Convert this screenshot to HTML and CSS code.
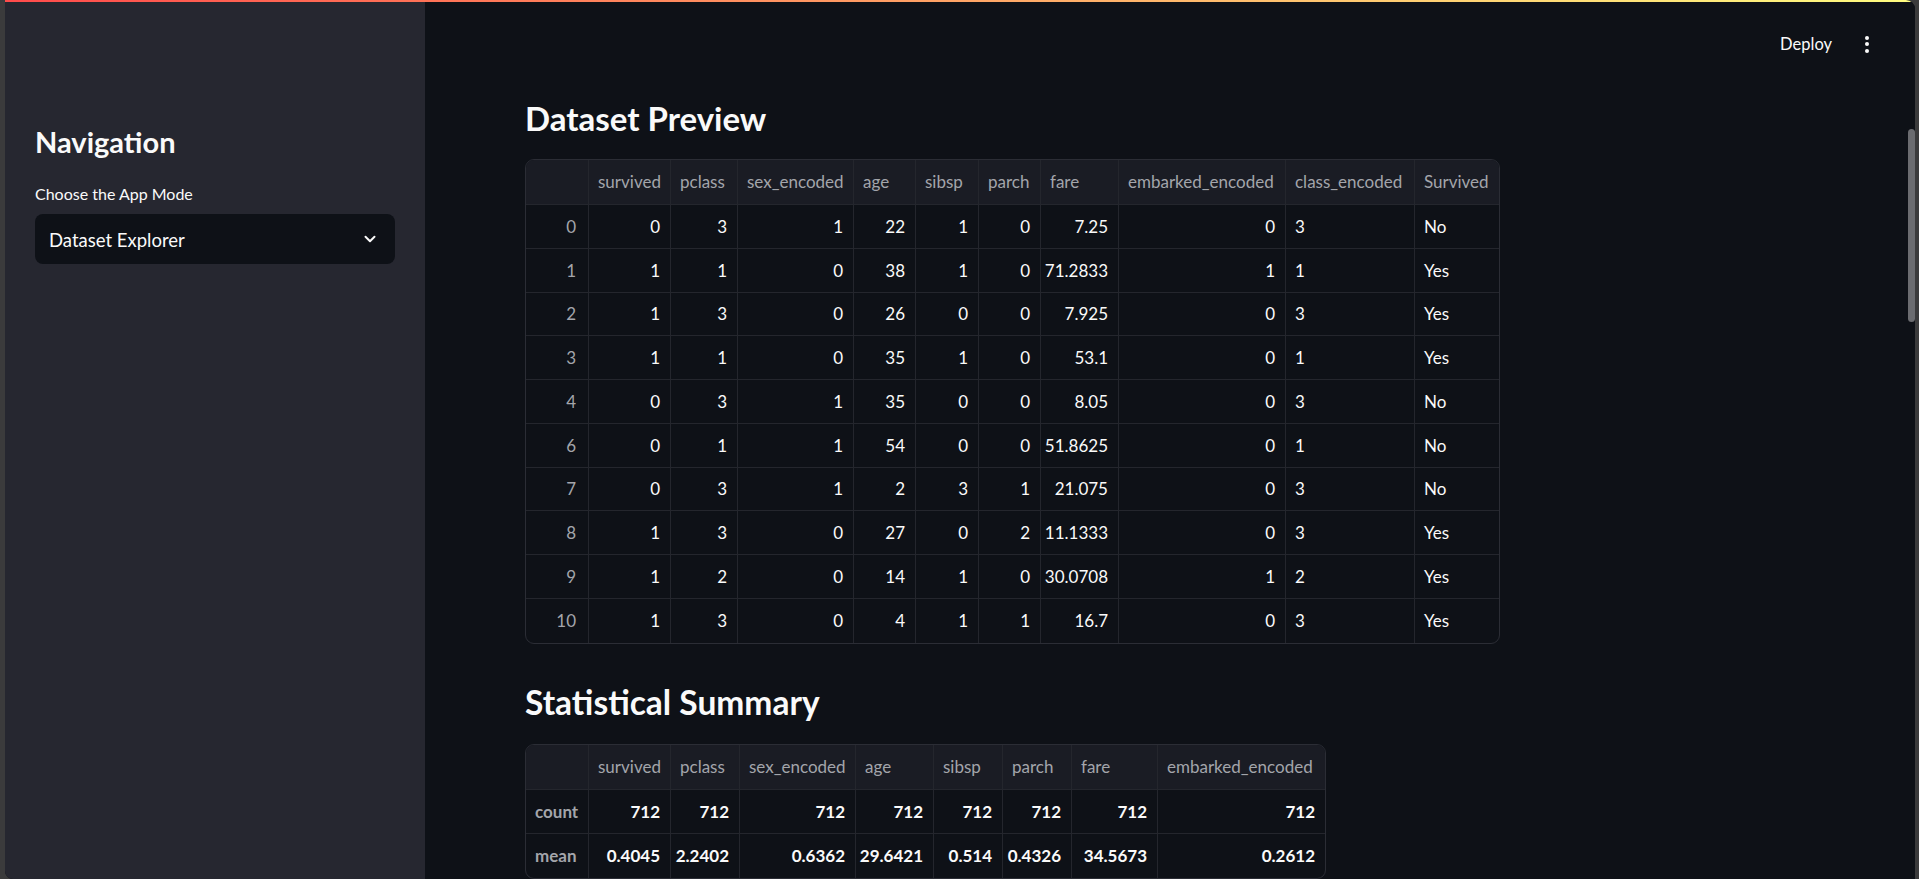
FILE: index.html
```html
<!DOCTYPE html>
<html lang="en">
<head>
<meta charset="utf-8">
<title>Titanic App</title>
<link rel="stylesheet" href="styles.css">
</head>
<body>
<div class="app">
  <div class="decoration"></div>
  <div class="shell">
    <aside class="sidebar">
      <h3 class="side-title">Navigation</h3>
      <div class="field-label">Choose the App Mode</div>
      <div class="select">
        <span class="select-value">Dataset Explorer</span>
        <svg class="chevron" width="14" height="14" viewBox="0 0 14 14"><path d="M2.5 4.8 L7 9.2 L11.5 4.8" fill="none" stroke="#fafafa" stroke-width="2" stroke-linecap="round" stroke-linejoin="round"/></svg>
      </div>
    </aside>
    <main class="main">
      <header class="topbar">
        <span class="deploy">Deploy</span>
        <span class="menu"><i></i><i></i><i></i></span>
      </header>
      <section class="content">
        <h3 class="heading">Dataset Preview</h3>
        <div class="frame">
          <div class="grid grid-preview">
            <div class="c h"></div><div class="c h">survived</div><div class="c h">pclass</div><div class="c h">sex_encoded</div><div class="c h">age</div><div class="c h">sibsp</div><div class="c h">parch</div><div class="c h">fare</div><div class="c h">embarked_encoded</div><div class="c h">class_encoded</div><div class="c h last">Survived</div>

            <div class="c idx">0</div><div class="c n">0</div><div class="c n">3</div><div class="c n">1</div><div class="c n">22</div><div class="c n">1</div><div class="c n">0</div><div class="c n">7.25</div><div class="c n">0</div><div class="c s">3</div><div class="c s last">No</div>
            <div class="c idx">1</div><div class="c n">1</div><div class="c n">1</div><div class="c n">0</div><div class="c n">38</div><div class="c n">1</div><div class="c n">0</div><div class="c n">71.2833</div><div class="c n">1</div><div class="c s">1</div><div class="c s last">Yes</div>
            <div class="c idx">2</div><div class="c n">1</div><div class="c n">3</div><div class="c n">0</div><div class="c n">26</div><div class="c n">0</div><div class="c n">0</div><div class="c n">7.925</div><div class="c n">0</div><div class="c s">3</div><div class="c s last">Yes</div>
            <div class="c idx">3</div><div class="c n">1</div><div class="c n">1</div><div class="c n">0</div><div class="c n">35</div><div class="c n">1</div><div class="c n">0</div><div class="c n">53.1</div><div class="c n">0</div><div class="c s">1</div><div class="c s last">Yes</div>
            <div class="c idx">4</div><div class="c n">0</div><div class="c n">3</div><div class="c n">1</div><div class="c n">35</div><div class="c n">0</div><div class="c n">0</div><div class="c n">8.05</div><div class="c n">0</div><div class="c s">3</div><div class="c s last">No</div>
            <div class="c idx">6</div><div class="c n">0</div><div class="c n">1</div><div class="c n">1</div><div class="c n">54</div><div class="c n">0</div><div class="c n">0</div><div class="c n">51.8625</div><div class="c n">0</div><div class="c s">1</div><div class="c s last">No</div>
            <div class="c idx">7</div><div class="c n">0</div><div class="c n">3</div><div class="c n">1</div><div class="c n">2</div><div class="c n">3</div><div class="c n">1</div><div class="c n">21.075</div><div class="c n">0</div><div class="c s">3</div><div class="c s last">No</div>
            <div class="c idx">8</div><div class="c n">1</div><div class="c n">3</div><div class="c n">0</div><div class="c n">27</div><div class="c n">0</div><div class="c n">2</div><div class="c n">11.1333</div><div class="c n">0</div><div class="c s">3</div><div class="c s last">Yes</div>
            <div class="c idx">9</div><div class="c n">1</div><div class="c n">2</div><div class="c n">0</div><div class="c n">14</div><div class="c n">1</div><div class="c n">0</div><div class="c n">30.0708</div><div class="c n">1</div><div class="c s">2</div><div class="c s last">Yes</div>
            <div class="c idx b">10</div><div class="c n b">1</div><div class="c n b">3</div><div class="c n b">0</div><div class="c n b">4</div><div class="c n b">1</div><div class="c n b">1</div><div class="c n b">16.7</div><div class="c n b">0</div><div class="c s b">3</div><div class="c s last b">Yes</div>
          </div>
        </div>

        <h3 class="heading heading-2">Statistical Summary</h3>
        <div class="frame">
          <div class="grid grid-summary">
            <div class="c h"></div><div class="c h">survived</div><div class="c h">pclass</div><div class="c h">sex_encoded</div><div class="c h">age</div><div class="c h">sibsp</div><div class="c h">parch</div><div class="c h">fare</div><div class="c h last">embarked_encoded</div>

            <div class="c idx l">count</div><div class="c n bold">712</div><div class="c n bold">712</div><div class="c n bold">712</div><div class="c n bold">712</div><div class="c n bold">712</div><div class="c n bold">712</div><div class="c n bold">712</div><div class="c n bold last">712</div>
            <div class="c idx l b">mean</div><div class="c n bold b">0.4045</div><div class="c n bold b">2.2402</div><div class="c n bold b">0.6362</div><div class="c n bold b">29.6421</div><div class="c n bold b">0.514</div><div class="c n bold b">0.4326</div><div class="c n bold b">34.5673</div><div class="c n bold last b">0.2612</div>
          </div>
        </div>
      </section>
      <div class="scroll-thumb"></div>
    </main>
  </div>
</div>
</body>
</html>
```

FILE: styles.css
```css
* { box-sizing: border-box; }

html, body {
  margin: 0;
  height: 100%;
  overflow: hidden;
}

body {
  background: #3b3b3c;
  font-family: "Lato", "Noto Sans", sans-serif;
  color: #fafafa;
}

.app {
  margin: 0 4px 0 5px;
  height: 879px;
  display: flex;
  flex-direction: column;
  border-radius: 0 9px 0 8px;
  overflow: hidden;
  background: #0e1117;
}

.decoration {
  height: 2px;
  flex: none;
  background: linear-gradient(90deg, #ff4b4b, #fffd80);
}

.shell {
  flex: 1;
  display: flex;
  min-height: 0;
}

/* Sidebar */
.sidebar {
  width: 420px;
  flex: none;
  background: #262730;
  padding: 122px 30px 0 30px;
}

.side-title {
  margin: 0;
  font-size: 29px;
  line-height: 36px;
  font-weight: 700;
  color: #fafafa;
}

.field-label {
  margin-top: 22px;
  font-size: 16px;
  line-height: 24px;
  color: #fafafa;
}

.select {
  margin-top: 8px;
  height: 50px;
  border-radius: 8px;
  background: #0e1117;
  display: flex;
  align-items: center;
  justify-content: space-between;
  padding: 0 18px 0 14px;
}

.select-value {
  font-size: 18.5px;
  line-height: 24px;
  padding-top: 2px;
  color: #fafafa;
}

.chevron { display: block; }

/* Main */
.main {
  flex: 1;
  position: relative;
  background: #0e1117;
  overflow: hidden;
}

.topbar {
  height: 84px;
  display: flex;
  align-items: center;
  justify-content: flex-end;
  padding-right: 46px;
  gap: 33px;
}

.deploy {
  font-size: 16.5px;
  color: #fafafa;
}

.menu {
  display: flex;
  flex-direction: column;
  gap: 2.5px;
  width: 4px;
}

.menu i {
  display: block;
  width: 4px;
  height: 4px;
  border-radius: 50%;
  background: #fafafa;
}

.content {
  padding-left: 100px;
}

.heading {
  margin: 12px 0 21px 0;
  font-size: 33px;
  line-height: 40px;
  font-weight: 700;
  color: #fafafa;
}

.heading-2 {
  margin-top: 38px;
  margin-bottom: 22px;
  font-size: 33.5px;
}

.frame {
  display: inline-block;
  border: 1px solid #2b2d35;
  border-radius: 9px;
  overflow: hidden;
  vertical-align: top;
}

.grid {
  display: grid;
  font-size: 17px;
}

.grid-preview {
  grid-template-columns: 63px 82px 67px 116px 62px 63px 62px 78px 167px 129px 84px;
  grid-template-rows: 45px repeat(10, 43.75px);
}

.grid-summary {
  grid-template-columns: 63px 82px 69px 116px 78px 69px 69px 86px 167px;
  grid-template-rows: 45px 44px 44px;
}

.c {
  display: flex;
  align-items: center;
  padding: 0 10px 0 9px;
  border-right: 1px solid #24262d;
  border-bottom: 1px solid #24262d;
  white-space: nowrap;
  overflow: hidden;
  color: #fafafa;
}

.c.last { border-right: none; }
.c.b { border-bottom: none; }

.h {
  background: #1a1c24;
  color: #a3a5ab;
  padding-bottom: 1px;
}

.n { justify-content: flex-end; }
.s { justify-content: flex-start; }

.idx {
  justify-content: flex-end;
  color: #a3a5ab;
  padding-right: 12px;
}

.idx.l {
  justify-content: flex-start;
  font-weight: 700;
}

.bold { font-weight: 700; }

.scroll-thumb {
  position: absolute;
  right: 0;
  top: 127px;
  width: 7px;
  height: 193px;
  border-radius: 4px;
  background: #6b6c70;
}
```
